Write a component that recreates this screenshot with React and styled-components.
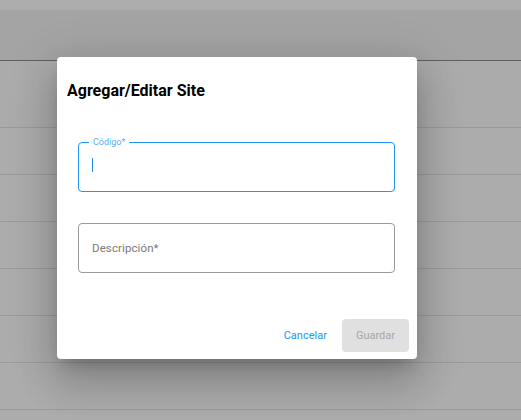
import React from "react";
import styled, { createGlobalStyle } from "styled-components";

const GlobalStyle = createGlobalStyle`
  html, body {
    margin: 0;
    padding: 0;
    background: #acacac;
    font-family: Roboto, "Liberation Sans", Arial, sans-serif;
  }
`;

const Page = styled.div`
  position: relative;
  width: 521px;
  height: 420px;
  overflow: hidden;
  background: #acacac;
`;

const TopStrip = styled.div`
  height: 10px;
  background: #adadad;
`;

const Header = styled.div`
  height: 50px;
  background: #a4a4a4;
  border-bottom: 1px solid #606060;
`;

const TableHead = styled.div`
  height: 66px;
  background: #ababab;
  border-bottom: 1px solid #9a9a9a;
`;

const Row = styled.div`
  height: 46px;
  background: #acacac;
  border-bottom: 1px solid #9a9a9a;
`;

const Dialog = styled.div`
  position: absolute;
  left: 57px;
  top: 57px;
  width: 360px;
  height: 302px;
  background: #fff;
  border-radius: 4px;
  box-shadow: 0px 11px 15px -7px rgba(0, 0, 0, 0.2),
    0px 24px 38px 3px rgba(0, 0, 0, 0.14), 0px 9px 46px 8px rgba(0, 0, 0, 0.12);
  display: flex;
  flex-direction: column;
  box-sizing: border-box;
`;

const Title = styled.h2`
  margin: 0;
  padding: 24px 10px 0;
  font-size: 16px;
  font-weight: 700;
  line-height: 20px;
  color: #000;
`;

const Fields = styled.div`
  display: flex;
  flex-direction: column;
  gap: 31px;
  padding: 0 22px 0 21px;
  margin-top: 41px;
`;

const Field = styled.div`
  position: relative;
  height: 50px;
  box-sizing: border-box;
  padding: 0 13px;
  border: 1px solid ${(p) => (p.$focused ? "#2196f3" : "#9a9a9a")};
  border-radius: 4px;
  display: flex;
  align-items: center;
`;

const FloatLabel = styled.span`
  position: absolute;
  left: 10px;
  top: -6px;
  padding: 0 4px;
  background: #fff;
  font-size: 9px;
  line-height: 10px;
  color: #5aaef5;
`;

const Caret = styled.span`
  display: block;
  width: 1px;
  height: 14px;
  background: #1e88e5;
  margin-top: -4px;
`;

const Placeholder = styled.span`
  font-size: 11.5px;
  color: #7a7a7a;
  letter-spacing: 0.1px;
  margin-top: 0;
`;

const Actions = styled.div`
  margin-top: auto;
  display: flex;
  justify-content: flex-end;
  align-items: center;
  gap: 8px;
  padding: 0 8px 7px;
`;

const Button = styled.button`
  font-family: Roboto, "Liberation Sans", Arial, sans-serif;
  font-size: 11px;
  border: none;
  border-radius: 4px;
  height: 33px;
  padding: 0 ${(p) => (p.$filled ? "14px" : "7px")};
  background: ${(p) => (p.$filled ? "#e0e0e0" : "transparent")};
  color: ${(p) => (p.$filled ? "#a6a6a6" : "#2196f3")};
  cursor: pointer;
`;

export default function App() {
  return (
    <>
      <GlobalStyle />
      <Page>
        <TopStrip />
        <Header />
        <TableHead />
        {Array.from({ length: 7 }).map((_, i) => (
          <Row key={i} />
        ))}
        <Dialog>
          <Title>Agregar/Editar Site</Title>
          <Fields>
            <Field $focused>
              <FloatLabel>Código*</FloatLabel>
              <Caret />
            </Field>
            <Field>
              <Placeholder>Descripción*</Placeholder>
            </Field>
          </Fields>
          <Actions>
            <Button>Cancelar</Button>
            <Button $filled disabled>
              Guardar
            </Button>
          </Actions>
        </Dialog>
      </Page>
    </>
  );
}
